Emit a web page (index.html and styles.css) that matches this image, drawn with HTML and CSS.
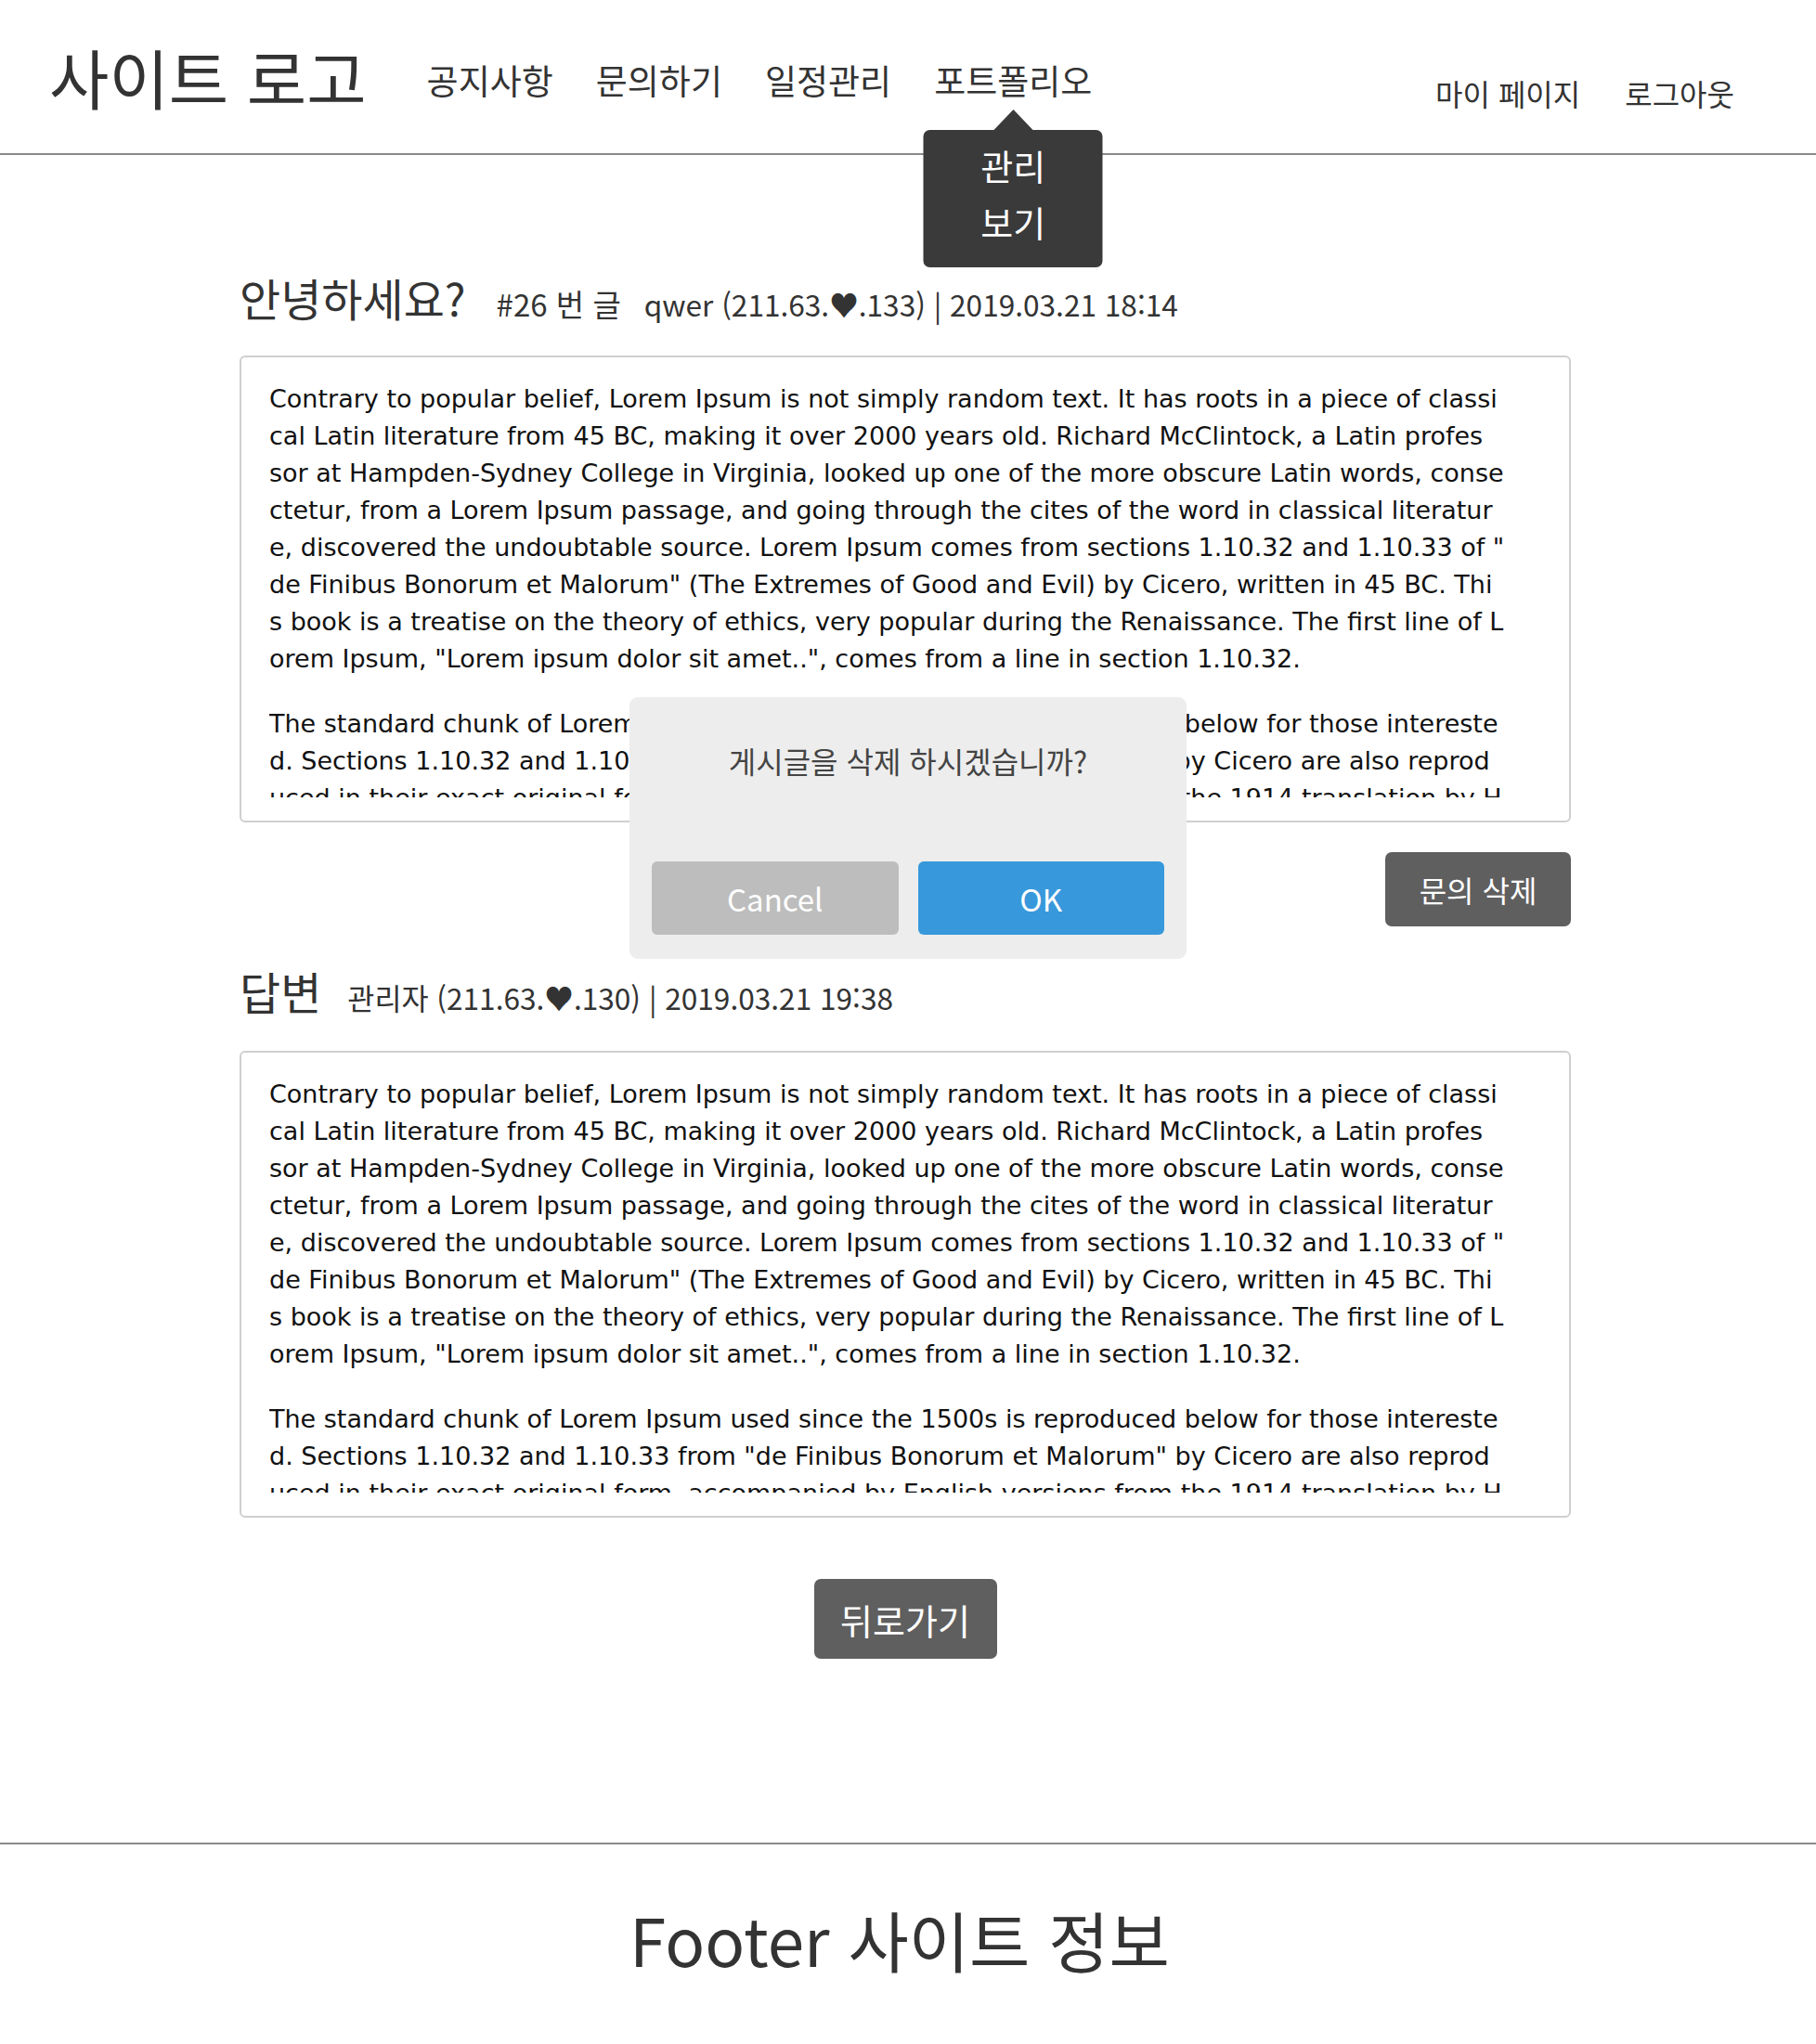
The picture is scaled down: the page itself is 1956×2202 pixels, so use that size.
FILE: index.html
```html
<!DOCTYPE html>
<html lang="ko">
<head>
<meta charset="utf-8">
<title>문의 상세</title>
<link rel="stylesheet" href="styles.css">
</head>
<body>
<header class="site-header">
  <div class="logo">사이트 로고</div>
  <nav class="main-nav">
    <a class="nav-link" href="#">공지사항</a>
    <a class="nav-link" href="#">문의하기</a>
    <a class="nav-link" href="#">일정관리</a>
    <div class="nav-item">
      <a class="nav-link" href="#">포트폴리오</a>
      <div class="dropdown">
        <a class="dropdown-link" href="#">관리</a>
        <a class="dropdown-link" href="#">보기</a>
      </div>
    </div>
  </nav>
  <nav class="user-nav">
    <a class="user-link" href="#">마이 페이지</a>
    <a class="user-link" href="#">로그아웃</a>
  </nav>
</header>

<main class="content">
  <section class="post">
    <div class="post-head">
      <h1 class="post-title">안녕하세요?</h1>
      <span class="post-no">#26 번 글</span>
      <span class="post-meta">qwer (211.63.♥.133) | 2019.03.21 18:14</span>
    </div>
    <div class="post-box">
      <div class="post-body">
        <p>Contrary to popular belief, Lorem Ipsum is not simply random text. It has roots in a piece of classi<br>cal Latin literature from 45 BC, making it over 2000 years old. Richard McClintock, a Latin profes<br>sor at Hampden-Sydney College in Virginia, looked up one of the more obscure Latin words, conse<br>ctetur, from a Lorem Ipsum passage, and going through the cites of the word in classical literatur<br>e, discovered the undoubtable source. Lorem Ipsum comes from sections 1.10.32 and 1.10.33 of "<br>de Finibus Bonorum et Malorum" (The Extremes of Good and Evil) by Cicero, written in 45 BC. Thi<br>s book is a treatise on the theory of ethics, very popular during the Renaissance. The first line of L<br>orem Ipsum, "Lorem ipsum dolor sit amet..", comes from a line in section 1.10.32.</p>
        <p>The standard chunk of Lorem Ipsum used since the 1500s is reproduced below for those intereste<br>d. Sections 1.10.32 and 1.10.33 from "de Finibus Bonorum et Malorum" by Cicero are also reprod<br>uced in their exact original form, accompanied by English versions from the 1914 translation by H<br>. Rackham.</p>
      </div>
    </div>
    <div class="post-actions">
      <button class="btn btn-dark btn-delete" type="button">문의 삭제</button>
    </div>
  </section>

  <section class="post answer">
    <div class="post-head">
      <h2 class="post-title">답변</h2>
      <span class="post-meta">관리자 (211.63.♥.130) | 2019.03.21 19:38</span>
    </div>
    <div class="post-box">
      <div class="post-body">
        <p>Contrary to popular belief, Lorem Ipsum is not simply random text. It has roots in a piece of classi<br>cal Latin literature from 45 BC, making it over 2000 years old. Richard McClintock, a Latin profes<br>sor at Hampden-Sydney College in Virginia, looked up one of the more obscure Latin words, conse<br>ctetur, from a Lorem Ipsum passage, and going through the cites of the word in classical literatur<br>e, discovered the undoubtable source. Lorem Ipsum comes from sections 1.10.32 and 1.10.33 of "<br>de Finibus Bonorum et Malorum" (The Extremes of Good and Evil) by Cicero, written in 45 BC. Thi<br>s book is a treatise on the theory of ethics, very popular during the Renaissance. The first line of L<br>orem Ipsum, "Lorem ipsum dolor sit amet..", comes from a line in section 1.10.32.</p>
        <p>The standard chunk of Lorem Ipsum used since the 1500s is reproduced below for those intereste<br>d. Sections 1.10.32 and 1.10.33 from "de Finibus Bonorum et Malorum" by Cicero are also reprod<br>uced in their exact original form, accompanied by English versions from the 1914 translation by H<br>. Rackham.</p>
      </div>
    </div>
  </section>

  <div class="back-row">
    <button class="btn btn-dark btn-back" type="button">뒤로가기</button>
  </div>
</main>

<footer class="site-footer">Footer 사이트 정보</footer>

<div class="dialog" role="dialog">
  <p class="dialog-msg">게시글을 삭제 하시겠습니까?</p>
  <div class="dialog-buttons">
    <button class="dialog-btn dialog-cancel" type="button">Cancel</button>
    <button class="dialog-btn dialog-ok" type="button">OK</button>
  </div>
</div>
</body>
</html>
```
FILE: styles.css
```css
* { box-sizing: border-box; }
html, body { margin: 0; padding: 0; }
body {
  position: relative;
  min-height: 2202px;
  font-family: "Noto Sans CJK KR", "Noto Sans", sans-serif;
  color: #333;
  background: #fff;
  display: flex;
  flex-direction: column;
}
a { color: inherit; text-decoration: none; }

/* header */
.site-header {
  display: flex;
  align-items: flex-start;
  height: 167px;
  border-bottom: 2px solid #8a8a8a;
  padding-left: 53px;
  padding-right: 88px;
}
.logo {
  font-size: 70px;
  line-height: 70px;
  margin-top: 48px;
  color: #333;
}
.main-nav {
  display: flex;
  gap: 46px;
  margin-left: 65px;
  margin-top: 66px;
}
.nav-link {
  font-size: 37px;
  line-height: 40px;
  display: block;
}
.nav-item { position: relative; }
.dropdown {
  position: absolute;
  top: 74px;
  left: 50%;
  transform: translateX(-50%);
  width: 193px;
  padding: 7px 0 19px;
  background: #3a3a3a;
  border-radius: 7px;
  display: flex;
  flex-direction: column;
  align-items: center;
}
.dropdown::before {
  content: "";
  position: absolute;
  top: -22px;
  left: 50%;
  transform: translateX(-50%);
  border-left: 21px solid transparent;
  border-right: 21px solid transparent;
  border-bottom: 22px solid #3a3a3a;
}
.dropdown-link {
  color: #fff;
  font-size: 38px;
  line-height: 61px;
}
.user-nav {
  display: flex;
  gap: 48px;
  margin-left: auto;
  margin-top: 80px;
}
.user-link {
  font-size: 32px;
  line-height: 40px;
}

/* content */
.content {
  width: 1434px;
  margin-left: calc(50% - 720px);
  padding-top: 123px;
  flex: 1;
}
.post-head {
  display: flex;
  align-items: baseline;
  height: 60px;
}
.post-title {
  margin: 0;
  font-size: 48px;
  font-weight: 400;
  line-height: 60px;
  color: #333;
}
.post-no {
  margin-left: 33px;
  font-size: 33px;
  color: #333;
}
.post-meta {
  margin-left: 25px;
  font-size: 31.6px;
  color: #333;
}
.answer .post-meta { margin-left: 28px; }
.post-box {
  margin-top: 33px;
  border: 2px solid #cfcfcf;
  border-radius: 6px;
  padding: 25px 30px;
}
.post-body {
  height: 449px;
  overflow: hidden;
  font-family: "DejaVu Sans", sans-serif;
  font-size: 27px;
  line-height: 40px;
  color: #111;
  white-space: nowrap;
}
.post-body p { margin: 0 0 30px; }

.post-actions {
  display: flex;
  justify-content: flex-end;
  margin-top: 32px;
}
.btn {
  border: none;
  border-radius: 7px;
  font-family: "Noto Sans CJK KR", sans-serif;
  color: #fff;
  cursor: pointer;
  padding: 0;
}
.btn-dark { background: #5f5f5f; }
.btn-delete {
  width: 200px;
  height: 80px;
  font-size: 32px;
}
.answer { margin-top: 39px; }
.answer .post-box { margin-top: 35px; }

.back-row {
  display: flex;
  justify-content: center;
  margin-top: 66px;
}
.btn-back {
  width: 197px;
  height: 86px;
  font-size: 38px;
}

/* footer */
.site-footer {
  border-top: 2px solid #8a8a8a;
  height: 217px;
  display: flex;
  align-items: center;
  justify-content: center;
  padding: 0 18px 14px 0;
  font-size: 71px;
  color: #333;
}

/* dialog */
.dialog {
  position: absolute;
  top: 751px;
  left: 50%;
  transform: translateX(-50%);
  width: 600px;
  height: 282px;
  background: #ededed;
  border-radius: 9px;
  padding: 0 24px 26px;
  display: flex;
  flex-direction: column;
}
.dialog-msg {
  margin: 44px 0 0;
  text-align: center;
  font-size: 32px;
  line-height: 48px;
  color: #444;
}
.dialog-buttons {
  margin-top: auto;
  display: flex;
  gap: 21px;
}
.dialog-btn {
  flex: 1;
  height: 79px;
  border: none;
  border-radius: 6px;
  color: #fff;
  font-family: "Noto Sans CJK KR", sans-serif;
  font-size: 33px;
}
.dialog-cancel { background: #bdbdbd; }
.dialog-ok { background: #3799db; }
```
